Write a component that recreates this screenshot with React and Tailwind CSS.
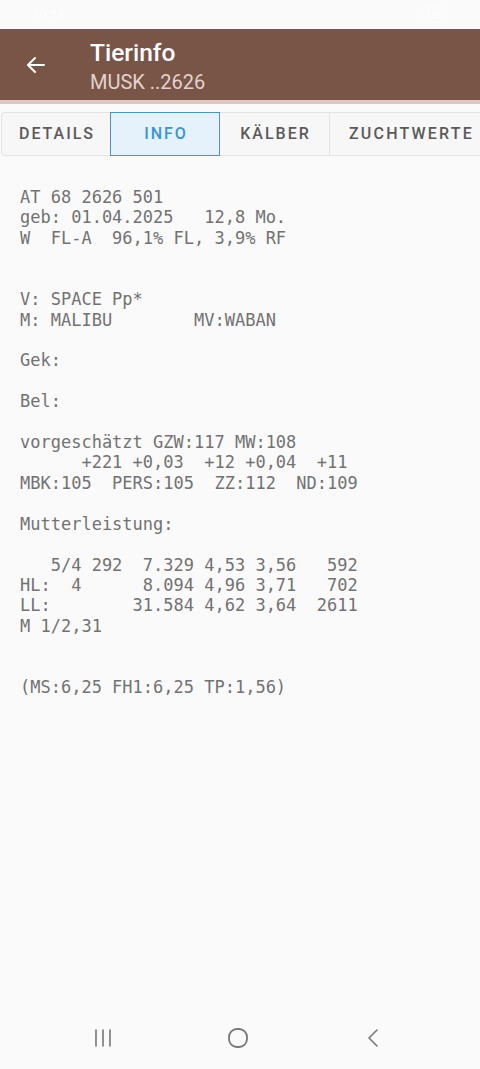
import React from "react";

const lines = [
  "AT 68 2626 501",
  "geb: 01.04.2025   12,8 Mo.",
  "W  FL-A  96,1% FL, 3,9% RF",
  "",
  "",
  "V: SPACE Pp*",
  "M: MALIBU        MV:WABAN",
  "",
  "Gek:",
  "",
  "Bel:",
  "",
  "vorgeschätzt GZW:117 MW:108",
  "      +221 +0,03  +12 +0,04  +11",
  "MBK:105  PERS:105  ZZ:112  ND:109",
  "",
  "Mutterleistung:",
  "",
  "   5/4 292  7.329 4,53 3,56   592",
  "HL:  4      8.094 4,96 3,71   702",
  "LL:        31.584 4,62 3,64  2611",
  "M 1/2,31",
  "",
  "",
  "(MS:6,25 FH1:6,25 TP:1,56)",
];

export default function App() {
  return (
    <div className="w-[480px] h-[1069px] bg-[#fafafa] flex flex-col overflow-hidden" style={{ fontFamily: "Roboto, 'Noto Sans', sans-serif" }}>
      {/* status bar */}
      <div className="h-[29px] bg-[#fafafa] flex items-center justify-between px-[32px] text-white text-[13px] font-medium">
        <span className="opacity-90">10:16</span>
        <span className="opacity-90 border border-white rounded-full px-1 text-[10px]">100</span>
      </div>
      {/* app bar */}
      <div className="h-[71px] bg-[#795548] flex items-center">
        <div className="w-[90px] flex items-center pl-[24px]">
          <svg width="24" height="24" viewBox="0 0 24 24" fill="none" stroke="white" strokeWidth="2" strokeLinecap="round" strokeLinejoin="round">
            <path d="M20 12H4.5" />
            <path d="M11 5l-7 7 7 7" />
          </svg>
        </div>
        <div className="flex flex-col leading-none pt-[4px]">
          <span className="text-white text-[24.5px] font-medium leading-[30px]">Tierinfo</span>
          <span className="text-[#e3d3cc] text-[20px] leading-[28px]">MUSK ..2626</span>
        </div>
      </div>
      <div className="h-[4px] bg-[#d9c9c3]" />
      {/* tabs */}
      <div className="mt-[8px] ml-[1px] flex h-[44px] border border-[#e3e3e3] rounded-l-[4px] bg-[#f7f7f7] w-[520px]">
        <div className="w-[108px] flex items-center justify-center pl-[2px] text-[16px] font-medium tracking-[2px] text-[#5a5a5a]">DETAILS</div>
        <div className="w-[110px] -my-px flex items-center justify-center pl-[2px] text-[16px] font-medium tracking-[2px] text-[#3b93d6] bg-[#e6f2fb] border border-[#4d94c4]">INFO</div>
        <div className="w-[110px] flex items-center justify-center pl-[2px] text-[16px] font-medium tracking-[2px] text-[#5a5a5a] border-r border-[#e3e3e3]">KÄLBER</div>
        <div className="flex-1 flex items-center pl-[19px] text-[16px] font-medium tracking-[2.2px] text-[#5a5a5a]">ZUCHTWERTE</div>
      </div>
      {/* content */}
      <div className="flex-1 pt-[31px] pl-[20px]">
        <pre className="text-[17px] leading-[20.42px] text-[#727272]" style={{ fontFamily: "'DejaVu Sans Mono', 'Liberation Mono', monospace" }}>
          {lines.join("\n")}
        </pre>
      </div>
      {/* nav bar */}
      <div className="h-[60px] flex items-center justify-center gap-[111px] pr-[4px] pb-[2px]">
        <svg width="24" height="24" viewBox="0 0 24 24" fill="none" stroke="#777" strokeWidth="1.6" strokeLinecap="round">
          <path d="M5 4v16M12 4v16M19 4v16" />
        </svg>
        <svg width="24" height="24" viewBox="0 0 24 24" fill="none" stroke="#777" strokeWidth="1.8">
          <rect x="3" y="3" width="18" height="18" rx="8" />
        </svg>
        <svg width="24" height="24" viewBox="0 0 24 24" fill="none" stroke="#777" strokeWidth="1.6" strokeLinecap="round" strokeLinejoin="round">
          <path d="M16 4l-8 8 8 8" />
        </svg>
      </div>
    </div>
  );
}
